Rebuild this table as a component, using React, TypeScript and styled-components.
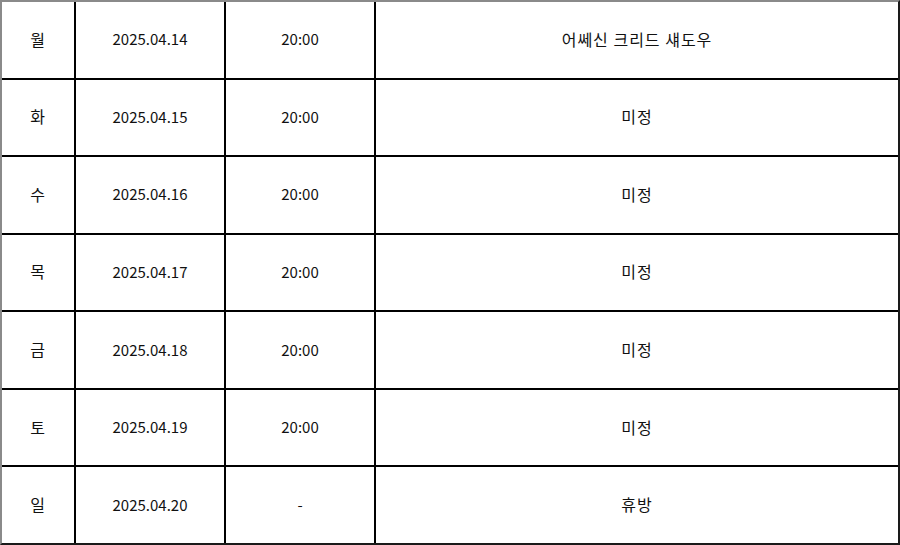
import React from "react";
import styled, { createGlobalStyle } from "styled-components";

const Global = createGlobalStyle`
  html, body { margin: 0; padding: 0; background: #fff; }
  body { font-family: "Noto Sans CJK KR", "Noto Sans", sans-serif; }
`;

const Table = styled.div`
  box-sizing: border-box;
  width: 900px;
  height: 545px;
  border-style: solid;
  border-width: 2px;
  border-color: #8a8a8a #1a1a1a #1a1a1a #8a8a8a;
  display: grid;
  grid-template-columns: 72px 148px 148px 1fr;
  grid-template-rows: repeat(7, 1fr);
  gap: 2px;
  background: #000;
`;

const Cell = styled.div<{ $kr?: boolean }>`
  background: #fff;
  display: flex;
  align-items: center;
  justify-content: center;
  padding-bottom: 2px;
  font-size: ${(p) => (p.$kr ? "16px" : "15px")};
  letter-spacing: ${(p) => (p.$kr ? "1px" : "0")};
  color: #111;
`;

const rows = [
  ["월", "2025.04.14", "20:00", "어쎄신 크리드 섀도우"],
  ["화", "2025.04.15", "20:00", "미정"],
  ["수", "2025.04.16", "20:00", "미정"],
  ["목", "2025.04.17", "20:00", "미정"],
  ["금", "2025.04.18", "20:00", "미정"],
  ["토", "2025.04.19", "20:00", "미정"],
  ["일", "2025.04.20", "-", "휴방"],
];

export default function App() {
  return (
    <>
      <Global />
      <Table>
        {rows.map((r, i) =>
          r.map((c, j) => (
            <Cell key={`${i}-${j}`} $kr={j === 0 || j === 3}>
              {c}
            </Cell>
          ))
        )}
      </Table>
    </>
  );
}
